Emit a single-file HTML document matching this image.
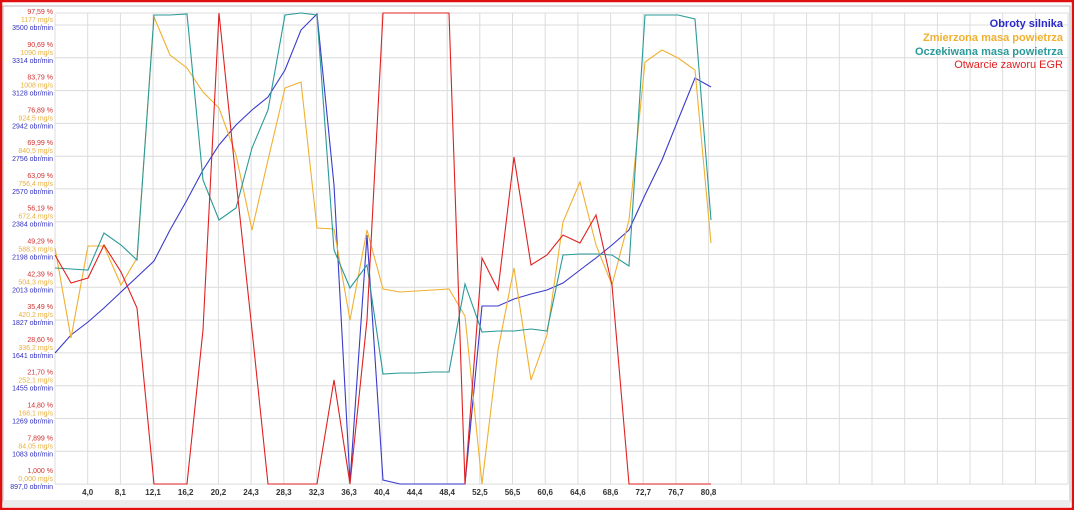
<!DOCTYPE html>
<html><head><meta charset="utf-8"><style>
html,body{margin:0;padding:0;background:#fff;}
svg{display:block;font-family:"Liberation Sans",sans-serif;}
</style></head><body>
<svg id="s" width="1074" height="510" viewBox="0 0 1074 510" xmlns="http://www.w3.org/2000/svg">
<rect x="0" y="0" width="1074" height="510" fill="#fff"/>
<rect x="3" y="6" width="1067" height="496" fill="#fff" stroke="#b8b8b8" stroke-width="1"/>
<rect x="3" y="500" width="1067" height="7" fill="#ececec"/>
<g id="grid" stroke="#dcdcdc" stroke-width="1"></g>
<g id="labels" font-size="7" text-anchor="end"></g>
<g id="xl" font-size="8" font-weight="bold" fill="#333" text-anchor="middle"></g>
<g fill="none" stroke-width="1.1">
<polyline stroke="#3a3acc" points="55,353 71,335 88,322 104,308 121,292 137,277 154,261 170,230 187,200 203,170 219,145 236,125 252,110 268,97 285,70 301,30 317,14 334,185 350,482 367,235 383,480 400,484 416,484 433,484 449,484 465,484 482,306 498,306 514,299 531,294 547,290 563,283 580,270 596,258 612,245 629,230 645,195 662,160 678,120 695,78 711,87"/>
<polyline stroke="#f0b030" points="55,248 71,338 88,246 104,246 121,285 137,258 154,17 170,55 187,68 203,92 219,108 236,155 252,230 268,160 285,88 301,82 317,228 334,229 350,320 367,230 383,289 400,292 416,291 433,290 449,289 465,316 482,484 498,350 514,268 531,380 547,335 563,222 580,182 596,245 612,285 629,220 645,62 662,50 678,58 695,70 711,243"/>
<polyline stroke="#2a9a9a" points="55,268 71,269 88,270 104,233 121,245 137,260 154,15 170,15 187,14 203,180 219,220 236,208 252,148 268,110 285,15 301,13 317,15 334,250 350,288 367,265 383,374 400,373 416,373 433,372 449,372 465,284 482,332 498,331 514,331 531,329 547,331 563,255 580,254 596,254 612,255 629,266 645,15 662,15 678,15 695,19 711,220"/>
<polyline stroke="#e02020" points="55,255 71,283 88,278 104,245 121,272 137,308 154,484 170,484 187,484 203,330 219,13 236,180 252,330 268,484 285,484 301,484 317,484 334,380 350,484 367,320 383,13 400,13 416,13 433,13 449,13 465,484 482,258 498,290 514,157 531,265 547,255 563,235 580,243 596,215 612,285 629,484 645,484 662,484 678,484 695,484 711,484"/>
</g>
<g font-size="11" font-weight="bold" text-anchor="end">
<text x="1063" y="27" fill="#2a2acc">Obroty silnika</text>
<text x="1063" y="41" fill="#f0b030">Zmierzona masa powietrza</text>
<text x="1063" y="55" fill="#2a9a9a">Oczekiwana masa powietrza</text>
<text x="1063" y="68" fill="#e02020" font-weight="normal">Otwarcie zaworu EGR</text>
</g>
<rect x="1" y="1" width="1072" height="508" fill="none" stroke="#e01010" stroke-width="2.5"/>
</svg>
<script>
var NS="http://www.w3.org/2000/svg";
function el(p,t,a,txt){var e=document.createElementNS(NS,t);for(var k in a)e.setAttribute(k,a[k]);if(txt)e.textContent=txt;p.appendChild(e);}
var g=document.getElementById('grid'),L=document.getElementById('labels'),X=document.getElementById('xl');
el(g,'line',{x1:55,y1:13,x2:1068,y2:13});
for(var k=0;k<15;k++){var y=25+k*32.79;el(g,'line',{x1:55,y1:y.toFixed(1),x2:1068,y2:y.toFixed(1)});}
for(var i=0;i<=31;i++){var x=55+i*32.68;el(g,'line',{x1:x.toFixed(1),y1:13,x2:x.toFixed(1),y2:484});}
var r=["97,59 %","90,69 %","83,79 %","76,89 %","69,99 %","63,09 %","56,19 %","49,29 %","42,39 %","35,49 %","28,60 %","21,70 %","14,80 %","7,899 %","1,000 %"];
var o=["1177 mg/s","1090 mg/s","1008 mg/s","924,5 mg/s","840,5 mg/s","756,4 mg/s","672,4 mg/s","588,3 mg/s","504,3 mg/s","420,2 mg/s","336,2 mg/s","252,1 mg/s","168,1 mg/s","84,05 mg/s","0,000 mg/s"];
var b=["3500 obr/min","3314 obr/min","3128 obr/min","2942 obr/min","2756 obr/min","2570 obr/min","2384 obr/min","2198 obr/min","2013 obr/min","1827 obr/min","1641 obr/min","1455 obr/min","1269 obr/min","1083 obr/min","897,0 obr/min"];
for(var k=0;k<15;k++){var y=25+k*32.79;
el(L,'text',{x:53,y:(y-11).toFixed(1),fill:'#d03030'},r[k]);
el(L,'text',{x:53,y:(y-3).toFixed(1),fill:'#e8b040'},o[k]);
el(L,'text',{x:53,y:(y+5).toFixed(1),fill:'#3030c0'},b[k]);}
var xs=["4,0","8,1","12,1","16,2","20,2","24,3","28,3","32,3","36,3","40,4","44,4","48,4","52,5","56,5","60,6","64,6","68,6","72,7","76,7","80,8"];
for(var i=0;i<xs.length;i++){el(X,'text',{x:(87.7+i*32.68).toFixed(1),y:495},xs[i]);}
</script>
</body></html>
